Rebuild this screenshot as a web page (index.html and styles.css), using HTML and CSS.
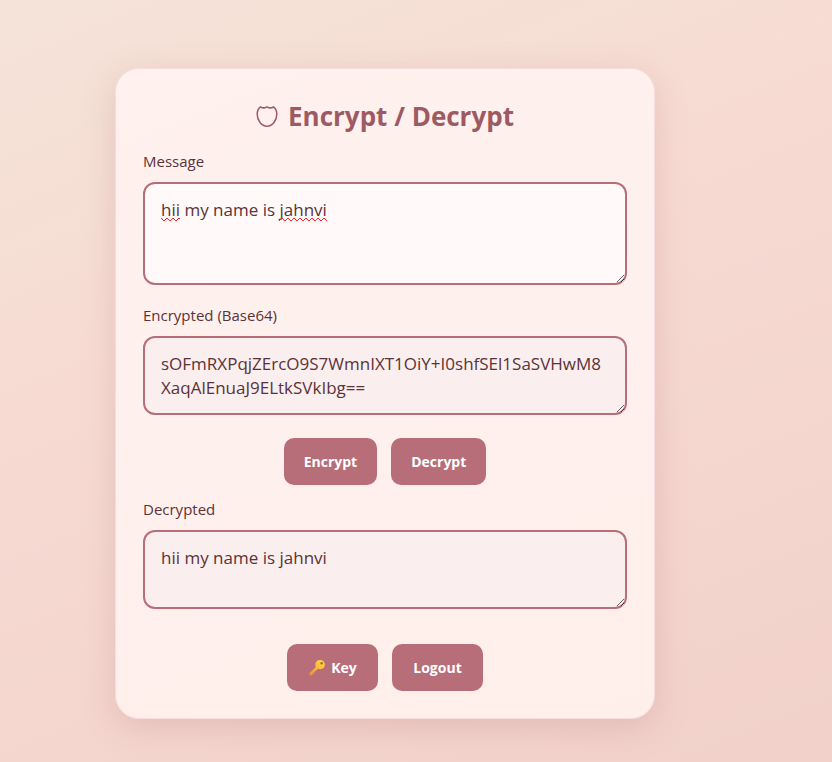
FILE: index.html
```html
<!DOCTYPE html>
<html lang="en">
<head>
<meta charset="utf-8">
<meta name="viewport" content="width=device-width, initial-scale=1">
<title>Encrypt / Decrypt</title>
<link rel="stylesheet" href="styles.css">
</head>
<body>
<main class="card">
  <h1 class="title">
    <svg class="shield" viewBox="0 0 22 22" aria-hidden="true"><path d="M4.500 1.800C6.300 3.100 9 3 11 1.800C13 3 15.700 3.100 17.500 1.800C20 3.600 20.800 6.300 20.800 9.300C20.800 15.500 16.500 21.200 11 21.200C5.500 21.200 1.200 15.500 1.200 9.300C1.200 6.300 2 3.600 4.500 1.800Z"/></svg>
    <span>Encrypt / Decrypt</span>
  </h1>
  <div class="field">
    <label for="message">Message</label>
    <div class="editor">
      <textarea id="message" class="box tall" spellcheck="false">hii my name is jahnvi</textarea>
      <svg class="squiggles" viewBox="0 0 168 5" aria-hidden="true"><path d="M0 1L3 4L6 1L9 4L12 1L15 4L18 1L19 2M118 4L121 1L124 4L127 1L130 4L133 1L136 4L139 1L142 4L145 1L148 4L151 1L154 4L157 1L160 4L163 1L166 4"/></svg>
    </div>
  </div>
  <div class="field">
    <label for="encrypted">Encrypted (Base64)</label>
    <textarea id="encrypted" class="box" readonly spellcheck="false">sOFmRXPqjZErcO9S7WmnIXT1OiY+I0shfSEl1SaSVHwM8XaqAlEnuaJ9ELtkSVkIbg==</textarea>
  </div>
  <div class="actions">
    <button type="button">Encrypt</button>
    <button type="button">Decrypt</button>
  </div>
  <div class="field">
    <label for="decrypted">Decrypted</label>
    <textarea id="decrypted" class="box" readonly spellcheck="false">hii my name is jahnvi</textarea>
  </div>
  <div class="actions footer">
    <button type="button">
      <svg class="key" viewBox="0 0 18 18" aria-hidden="true">
        <defs><linearGradient id="gold" x1="1" y1="0" x2="0" y2="1"><stop offset="0" stop-color="#ffd84a"/><stop offset=".5" stop-color="#fdb93b"/><stop offset="1" stop-color="#f08a4b"/></linearGradient></defs>
        <path fill="url(#gold)" d="M12 1C15 1 16.800 3 16.800 5.600C16.800 8.500 15 10.300 12.200 10.300C11.200 10.300 10.400 10.100 9.800 9.800L8.500 11.300L7.300 11.800L6.800 13.200L5.500 13.800L4.800 15.200L3.300 16.300L1.600 16.300L1.200 14.500L7.800 8C7.400 7.300 7.300 6.500 7.300 5.600C7.300 3 9.300 1 12 1Z"/>
        <circle cx="13.700" cy="4.300" r="1.200" fill="#a8663a"/>
      </svg>
      <span>Key</span>
    </button>
    <button type="button">Logout</button>
  </div>
</main>
</body>
</html>
```
FILE: styles.css
```css
* {
  box-sizing: border-box;
}

body {
  margin: 0;
  min-height: 100vh;
  padding: 68px 177px 43px 115px;
  background: linear-gradient(158deg, #f5e3d9 0%, #f5dfd5 20%, #f7dbd3 38%, #f1d1ca 100%);
  color: #5a3338;
  font: 15px/24px "Open Sans", "Noto Sans", sans-serif;
}

.card {
  max-width: 540px;
  margin: 0 auto;
  padding: 27px;
  border: 1px solid #fbdcdd;
  border-radius: 24px;
  background: linear-gradient(158deg, #fff1ee, #feefeb);
  box-shadow: 0 8px 32px rgba(183, 110, 121, 0.25);
}

.title {
  display: flex;
  align-items: center;
  justify-content: center;
  gap: 10px;
  margin: 0 0 13px;
  color: #9e5a63;
  font-size: 26px;
  line-height: 40px;
}

.shield {
  width: 22px;
  height: 22px;
  fill: none;
  stroke: currentColor;
  stroke-width: 1.5;
}

.field {
  margin-bottom: 18px;
}

.field label {
  display: block;
  margin-bottom: 9px;
}

.editor {
  position: relative;
}

.box {
  display: block;
  width: 100%;
  height: 79px;
  padding: 14px 16px;
  border: 2px solid #b76e79;
  border-radius: 12px;
  outline: none;
  background: #faeeee;
  color: inherit;
  font: inherit;
  font-size: 17px;
  overflow: hidden;
  resize: vertical;
}

.tall {
  height: 103px;
  background: #fffaf9;
}

.squiggles {
  position: absolute;
  top: 35px;
  left: 18px;
  width: 168px;
  height: 5px;
  fill: none;
  stroke: #f22;
  pointer-events: none;
}

.actions {
  display: flex;
  justify-content: center;
  gap: 14px;
  margin: 23px 0 12px;
}

.footer {
  margin: 35px 0 0;
}

button {
  display: flex;
  align-items: center;
  justify-content: center;
  gap: 5px;
  min-width: 91px;
  height: 47px;
  padding: 0 20px;
  border: 0;
  border-radius: 10px;
  background: #b76e79;
  color: #fff;
  font: inherit;
  font-size: 14px;
  font-weight: 700;
  cursor: pointer;
}

.key {
  width: 18px;
  height: 18px;
}
```
